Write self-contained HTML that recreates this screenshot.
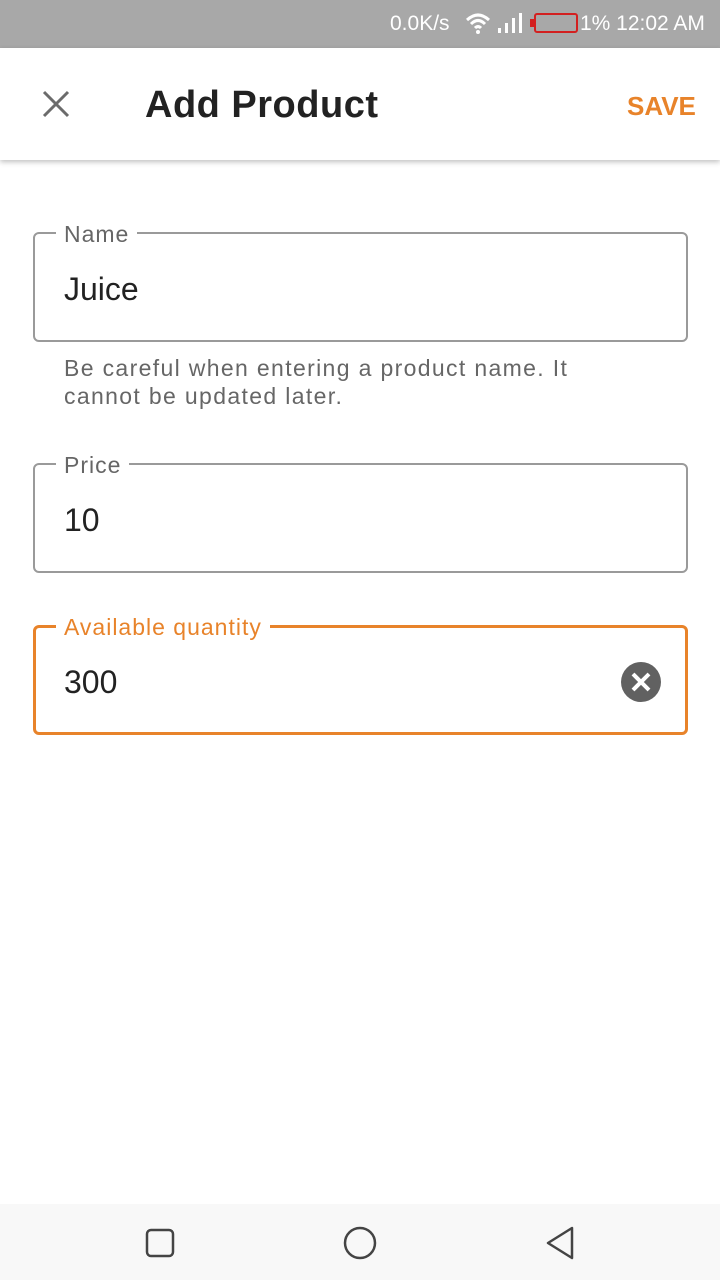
<!DOCTYPE html>
<html><head><meta charset="utf-8"><style>
*{margin:0;padding:0;box-sizing:border-box}
body{width:720px;height:1280px;position:relative;background:#fff;font-family:"Liberation Sans",sans-serif;overflow:hidden}
.sb{position:absolute;left:0;top:0;width:720px;height:48px;background:#a8a8a8;color:#fff;font-size:21px}
.tb{position:absolute;left:0;top:48px;width:720px;height:112px;background:#fff;box-shadow:0 2px 5px rgba(0,0,0,.25);z-index:2}
.box{position:absolute;left:33px;width:655px;height:110px;border:2px solid #9a9a9a;border-radius:6px}
.lab{position:absolute;left:21px;top:-14px;background:#fff;padding:0 8px;font-size:23px;color:#666;letter-spacing:1px;line-height:28px}
.val{position:absolute;left:29px;top:37px;font-size:32px;color:#222;line-height:36px}
.help{position:absolute;left:64px;top:354px;font-size:23px;color:#666;line-height:28px;letter-spacing:1.35px}
.nav{position:absolute;left:0;top:1204px;width:720px;height:76px;background:#f8f8f8}
</style></head><body>
<div class="sb">
<span style="position:absolute;left:390px;top:12px">0.0K/s</span>
<svg style="position:absolute;left:464px;top:12px" width="28" height="22" viewBox="0 0 28 22"><path d="M3 8 Q14 -2 25 8" stroke="#fff" stroke-width="3" fill="none"/><path d="M7 12 Q14 5 21 12" stroke="#fff" stroke-width="3" fill="none"/><path d="M11 16 Q14 13 17 16" stroke="#fff" stroke-width="3" fill="none"/><circle cx="14" cy="20" r="2" fill="#fff"/></svg>
<svg style="position:absolute;left:497px;top:12px" width="26" height="22"><rect x="1" y="16" width="3" height="5" fill="#fff"/><rect x="8" y="11" width="3" height="10" fill="#fff"/><rect x="15" y="6" width="3" height="15" fill="#fff"/><rect x="22" y="1" width="3" height="20" fill="#fff"/></svg>
<div style="position:absolute;left:530px;top:19px;width:4px;height:8px;background:#d32020"></div>
<div style="position:absolute;left:534px;top:13px;width:44px;height:20px;border:2px solid #d32020;border-radius:3px"></div>
<span style="position:absolute;left:580px;top:12px">1% 12:02 AM</span>
</div>
<div class="tb">
<svg style="position:absolute;left:42px;top:42px" width="28" height="28"><path d="M2 2L26 26M26 2L2 26" stroke="#6b6b6b" stroke-width="3"/></svg>
<div style="position:absolute;left:145px;top:36px;font-size:38px;font-weight:bold;color:#222;line-height:42px;letter-spacing:.5px">Add Product</div>
<div style="position:absolute;left:627px;top:43px;font-size:26px;font-weight:bold;color:#e8832a;line-height:30px">SAVE</div>
</div>
<div class="box" style="top:232px"><div class="lab">Name</div><div class="val">Juice</div></div>
<div class="help">Be careful when entering a product name. It<br>cannot be updated later.</div>
<div class="box" style="top:463px"><div class="lab">Price</div><div class="val">10</div></div>
<div class="box" style="top:625px;border:3px solid #e8832a"><div class="lab" style="color:#e8832a;left:20px;top:-15px">Available quantity</div><div class="val" style="left:28px;top:36px">300</div>
<svg style="position:absolute;left:584px;top:33px" width="42" height="42"><circle cx="21" cy="21" r="20" fill="#616161"/><path d="M13 13L29 29M29 13L13 29" stroke="#fff" stroke-width="4"/></svg></div>
<div class="nav">
<svg style="position:absolute;left:145px;top:24px" width="30" height="30"><rect x="2" y="2" width="26" height="26" rx="4" fill="none" stroke="#444" stroke-width="2.5"/></svg>
<svg style="position:absolute;left:343px;top:22px" width="34" height="34"><circle cx="17" cy="17" r="15" fill="none" stroke="#444" stroke-width="2.5"/></svg>
<svg style="position:absolute;left:544px;top:22px" width="32" height="34"><path d="M28 2L4 17L28 32Z" fill="none" stroke="#444" stroke-width="2.5" stroke-linejoin="round"/></svg>
</div>
</body></html>
